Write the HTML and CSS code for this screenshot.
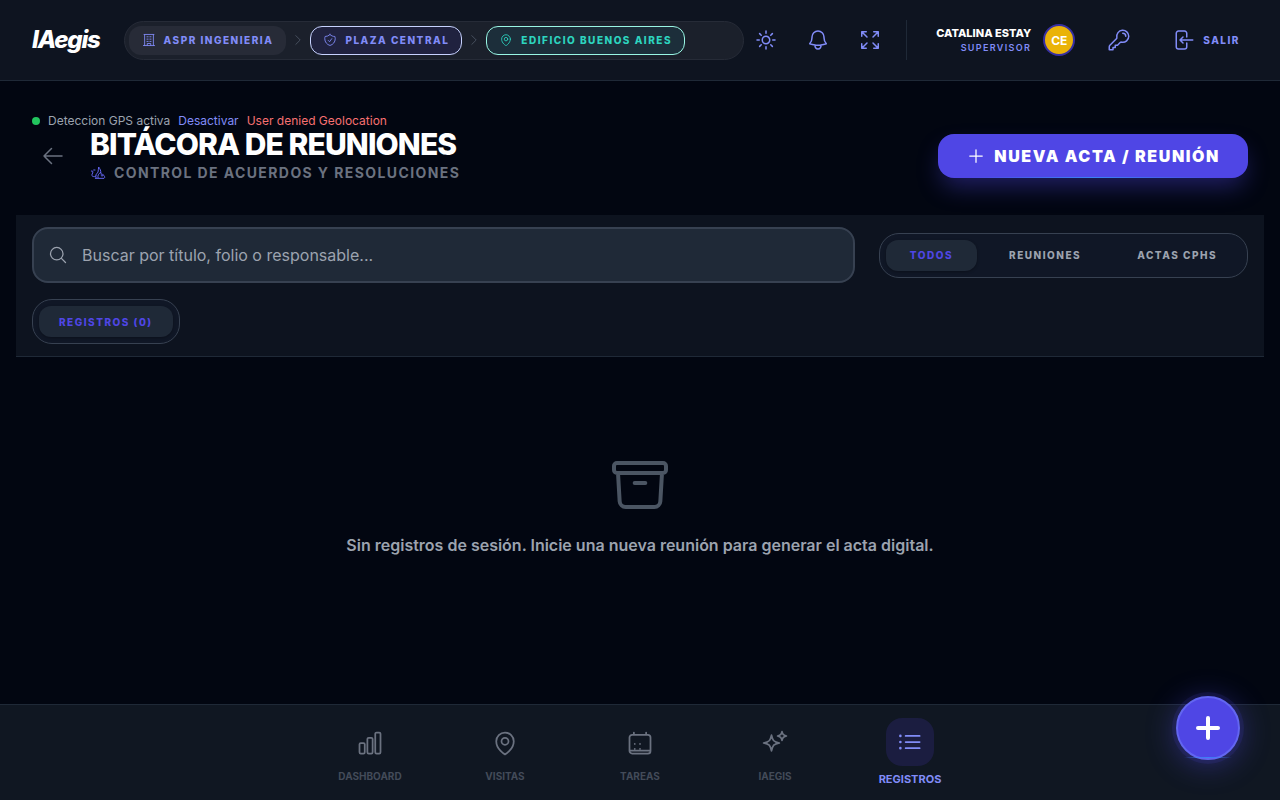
FILE: index.html
```html
<!DOCTYPE html>
<html lang="es">
<head>
    <meta charset="UTF-8">
    <meta name="viewport" content="width=device-width, initial-scale=1.0">
    <title>IAegis - Bitácora de Reuniones</title>
    <link rel="stylesheet" href="styles.css">
</head>
<body>
    <header class="topbar">
        <a href="#" class="logo">IAegis</a>

        <nav class="breadcrumb" aria-label="Contexto">
            <button class="crumb">
                <svg class="icon icon-xs" viewBox="0 0 24 24"><path d="M2.5 21.5h19M4.5 3v18.500M19.500 3v18.500M3.500 2.500h17M8.500 6.500h2m3 0h2M8.500 10.500h2m3 0h2M8.500 14.500h2m3 0h2M9 21.500v-3.500h6v3.500"/></svg>
                ASPR INGENIERIA
            </button>
            <svg class="icon icon-xs chevron" viewBox="0 0 24 24"><path d="m8.250 4.500 7.500 7.500-7.500 7.500"/></svg>
            <button class="crumb crumb-plaza">
                <svg class="icon icon-xs" viewBox="0 0 24 24"><path d="M9 12.75L11.25 15 15 9.750m-3-7.036A11.959 11.959 0 013.598 6 11.990 11.990 0 003 9.749c0 5.592 3.824 10.290 9 11.623 5.176-1.332 9-6.030 9-11.622 0-1.310-.21-2.571-.598-3.751h-.152c-3.196 0-6.100-1.248-8.250-3.285z"/></svg>
                PLAZA CENTRAL
            </button>
            <svg class="icon icon-xs chevron" viewBox="0 0 24 24"><path d="m8.250 4.500 7.500 7.500-7.500 7.500"/></svg>
            <button class="crumb crumb-edificio">
                <svg class="icon icon-xs" viewBox="0 0 24 24"><path d="M15 10.500a3 3 0 11-6 0 3 3 0 016 0z"/><path d="M19.500 10.500c0 7.142-7.500 11.250-7.500 11.250S4.500 17.642 4.500 10.500a7.500 7.500 0 1115 0z"/></svg>
                EDIFICIO BUENOS AIRES
            </button>
        </nav>

        <div class="tools">
            <button class="icon-button" aria-label="Tema">
                <svg class="icon" viewBox="0 0 24 24"><path d="M12 3v2.250m6.364.386l-1.591 1.591M21 12h-2.250m-.386 6.364l-1.591-1.591M12 18.750V21m-4.773-4.227l-1.591 1.591M5.250 12H3m4.227-4.773L5.636 5.636M15.750 12a3.750 3.750 0 11-7.500 0 3.750 3.750 0 017.500 0z"/></svg>
            </button>
            <button class="icon-button" aria-label="Notificaciones">
                <svg class="icon" viewBox="0 0 24 24"><path d="M14.857 17.082a23.848 23.848 0 005.454-1.310A8.967 8.967 0 0118 9.750v-.7V9A6 6 0 006 9v.75a8.967 8.967 0 01-2.312 6.022c1.733.64 3.560 1.085 5.455 1.310m5.714 0a24.255 24.255 0 01-5.714 0m5.714 0a3 3 0 11-5.714 0"/></svg>
            </button>
            <button class="icon-button" aria-label="Pantalla completa">
                <svg class="icon" viewBox="0 0 24 24"><path d="M3.750 3.750v4.500m0-4.500h4.500m-4.500 0L9 9M3.750 20.250v-4.500m0 4.500h4.500m-4.500 0L9 15M20.250 3.750h-4.500m4.500 0v4.500m0-4.500L15 9m5.250 11.250h-4.500m4.500 0v-4.500m0 4.500L15 15"/></svg>
            </button>
        </div>

        <div class="account">
            <div class="user">
                <span class="user-name">CATALINA ESTAY</span>
                <span class="user-role">SUPERVISOR</span>
            </div>
            <span class="avatar">CE</span>
            <button class="icon-button key-button" aria-label="Cambiar clave">
                <svg class="icon" viewBox="0 0 24 24"><path d="M15.750 5.250a3 3 0 013 3m3 0a6 6 0 01-7.029 5.912c-.563-.097-1.159.026-1.563.43L10.500 17.250H8.250v2.250H6v2.250H2.250v-2.818c0-.597.237-1.170.659-1.591l6.499-6.499c.404-.404.527-1 .43-1.563A6 6 0 1121.750 8.250z"/></svg>
            </button>
            <button class="logout">
                <svg class="icon" viewBox="0 0 24 24"><path d="M15.750 9V5.250A2.250 2.250 0 0013.500 3h-6a2.250 2.250 0 00-2.250 2.250v13.500A2.250 2.250 0 007.500 21h6a2.250 2.250 0 002.250-2.250V15M12 9l-3 3m0 0l3 3m-3-3h12.750"/></svg>
                SALIR
            </button>
        </div>
    </header>

    <main class="content">
        <div class="gps">
            <span class="gps-dot"></span>
            <span>Deteccion GPS activa</span>
            <button class="gps-toggle">Desactivar</button>
            <span class="gps-error">User denied Geolocation</span>
        </div>

        <div class="page-head">
            <a href="#" class="back" aria-label="Volver">
                <svg class="icon" viewBox="0 0 24 24"><path d="M10.500 19.500L3 12m0 0l7.500-7.500M3 12h18"/></svg>
            </a>
            <div class="titles">
                <h1>BITÁCORA DE REUNIONES</h1>
                <p class="subtitle">
                    <svg class="icon icon-sm" viewBox="0 0 24 24"><path d="M2 9c2-1 3 1 2 3s-2 4 0 5c2 .8 4 .5 5-.5M5.500 7.500h2M9 19c-1-3 0-6 3-8 1-3 0-5 1-8 2 3 4 6 3 9M12 19c-1-3 1-6 4-8 2 2 0 5 2 6 1-1 1-2 1-3 3 2 4 5 2 6H8"/></svg>
                    CONTROL DE ACUERDOS Y RESOLUCIONES
                </p>
            </div>
            <button class="new-button">
                <svg class="icon icon-md" viewBox="0 0 24 24"><path d="M12 4.500v15m7.500-7.500h-15"/></svg>
                NUEVA ACTA / REUNIÓN
            </button>
        </div>

        <section class="filters">
            <div class="filter-row">
                <label class="search">
                    <svg class="icon icon-md" viewBox="0 0 24 24"><path d="M21 21l-5.197-5.197m0 0A7.500 7.500 0 105.196 5.196a7.500 7.500 0 0010.607 10.607z"/></svg>
                    <input type="text" aria-label="Buscar" placeholder="Buscar por título, folio o responsable...">
                </label>
                <div class="tabs">
                    <button class="tab active">TODOS</button>
                    <button class="tab">REUNIONES</button>
                    <button class="tab">ACTAS CPHS</button>
                </div>
            </div>
            <div class="tabs tabs-count">
                <button class="tab active">REGISTROS (0)</button>
            </div>
        </section>

        <section class="empty">
            <svg class="icon icon-xl" viewBox="0 0 24 24"><path d="M20.250 7.500l-.625 10.632a2.250 2.250 0 01-2.247 2.118H6.622a2.250 2.250 0 01-2.247-2.118L3.750 7.500M10 11.250h4M3.375 7.500h17.250c.621 0 1.125-.504 1.125-1.125v-1.500c0-.621-.504-1.125-1.125-1.125H3.375c-.621 0-1.125.504-1.125 1.125v1.500c0 .621.504 1.125 1.125 1.125z"/></svg>
            <p>Sin registros de sesión. Inicie una nueva reunión para generar el acta digital.</p>
        </section>
    </main>

    <nav class="bottom-nav">
        <a href="#" class="nav-item">
            <svg class="icon icon-lg" viewBox="0 0 24 24"><path d="M3 13.125C3 12.504 3.504 12 4.125 12h2.250c.621 0 1.125.504 1.125 1.125v6.750C7.500 20.496 6.996 21 6.375 21h-2.250A1.125 1.125 0 013 19.875v-6.750zM9.750 8.625c0-.621.504-1.125 1.125-1.125h2.250c.621 0 1.125.504 1.125 1.125v11.250c0 .621-.504 1.125-1.125 1.125h-2.250a1.125 1.125 0 01-1.125-1.125V8.625zM16.500 4.125c0-.621.504-1.125 1.125-1.125h2.250C20.496 3 21 3.504 21 4.125v15.750c0 .621-.504 1.125-1.125 1.125h-2.250a1.125 1.125 0 01-1.125-1.125V4.125z"/></svg>
            <span>DASHBOARD</span>
        </a>
        <a href="#" class="nav-item">
            <svg class="icon icon-lg" viewBox="0 0 24 24"><path d="M15 10.500a3 3 0 11-6 0 3 3 0 016 0z"/><path d="M19.500 10.500c0 7.142-7.500 11.250-7.500 11.250S4.500 17.642 4.500 10.500a7.500 7.500 0 1115 0z"/></svg>
            <span>VISITAS</span>
        </a>
        <a href="#" class="nav-item">
            <svg class="icon icon-lg" viewBox="0 0 24 24"><path d="M6.750 3v2M17.250 3v2M5.250 5h13.500A2.250 2.250 0 0121 7.250v11.500A2.250 2.250 0 0118.750 21H5.250A2.250 2.250 0 013 18.750V7.250A2.250 2.250 0 015.250 5zM3 18.500h18M7.500 12.750h.01M12 12.750h.01M7.500 17h.01M12 17h.01"/></svg>
            <span>TAREAS</span>
        </a>
        <a href="#" class="nav-item">
            <svg class="icon icon-lg" viewBox="0 0 24 24"><path d="M9.813 15.904L9 18.750l-.813-2.846a4.500 4.500 0 00-3.090-3.090L2.250 12l2.846-.813a4.500 4.500 0 003.090-3.090L9 5.250l.813 2.846a4.500 4.500 0 003.090 3.090L15.750 12l-2.846.813a4.500 4.500 0 00-3.090 3.090zM18.259 8.715L18 9.750l-.259-1.035a3.375 3.375 0 00-2.455-2.456L14.250 6l1.036-.259a3.375 3.375 0 002.455-2.456L18 2.250l.259 1.035a3.375 3.375 0 002.456 2.456L21.750 6l-1.035.259a3.375 3.375 0 00-2.456 2.456z"/></svg>
            <span>IAEGIS</span>
        </a>
        <a href="#" class="nav-item current">
            <span class="nav-icon"><svg class="icon icon-lg" viewBox="0 0 24 24"><path d="M8.250 6.750h12M8.250 12h12m-12 5.250h12M3.750 6.750h.007v.008H3.750V6.750zm.375 0a.375.375 0 11-.75 0 .375.375 0 01.75 0zM3.750 12h.007v.008H3.750V12zm.375 0a.375.375 0 11-.75 0 .375.375 0 01.75 0zm-.375 5.250h.007v.008H3.750v-.008zm.375 0a.375.375 0 11-.75 0 .375.375 0 01.75 0z"/></svg></span>
            <span>REGISTROS</span>
        </a>
    </nav>

    <button class="fab" aria-label="Acciones">
        <svg class="icon" viewBox="0 0 24 24"><path d="M12 4.500v15m7.500-7.500h-15"/></svg>
    </button>
</body>
</html>
```
FILE: styles.css
```css
:root {
    --bg: #020611;
    --bar: #0e1420;
    --surface: #1f2937;
    --line: #1f2937;
    --line-strong: #374151;
    --indigo: #4f46e5;
    --indigo-light: #818cf8;
    --gray: #9ca3af;
    --gray-dark: #6b7280;
}

* { box-sizing: border-box; }

body {
    margin: 0;
    min-height: 100vh;
    display: flex;
    flex-direction: column;
    background: var(--bg);
    color: #fff;
    font-family: Inter, "Liberation Sans", sans-serif;
}

button {
    font: inherit;
    color: inherit;
    background: none;
    border: none;
    padding: 0;
    cursor: pointer;
}
a { color: inherit; text-decoration: none; }
h1, p { margin: 0; }

.icon {
    width: 24px;
    height: 24px;
    flex-shrink: 0;
    fill: none;
    stroke: currentColor;
    stroke-width: 1.5;
    stroke-linecap: round;
    stroke-linejoin: round;
}
.icon-xs { width: 14px; height: 14px; }
.icon-sm { width: 16px; height: 16px; }
.icon-md { width: 20px; height: 20px; }
.icon-lg { width: 28px; height: 28px; }
.icon-xl { width: 64px; height: 64px; }

/* Barra superior */
.topbar {
    display: flex;
    align-items: center;
    height: 81px;
    padding: 0 32px;
    background: var(--bar);
    border-bottom: 1px solid var(--line);
}
.logo {
    margin-right: 24px;
    font-size: 24px;
    font-weight: 800;
    font-style: italic;
    line-height: 32px;
    letter-spacing: -0.05em;
}
.breadcrumb {
    display: flex;
    flex: 1;
    align-items: center;
    gap: 5px;
    padding: 4px;
    background: #1b202b;
    border: 1px solid #262b37;
    border-radius: 20px;
}
.crumb {
    display: flex;
    align-items: center;
    gap: 8px;
    height: 29px;
    padding: 0 12px;
    border: 1px solid transparent;
    border-radius: 12px;
    background: #272b37;
    color: var(--indigo-light);
    font-size: 10px;
    font-weight: 800;
    letter-spacing: 0.15em;
    white-space: nowrap;
}
.crumb-plaza { background: #20223f; border-color: #c7d2fe; }
.crumb-edificio { background: #1c2e3a; border-color: #99f6e4; color: #2dd4bf; }
.chevron { color: #4b5563; }

.tools { display: flex; gap: 12px; padding: 0 16px 0 2px; }
.icon-button {
    display: flex;
    align-items: center;
    justify-content: center;
    width: 40px;
    height: 40px;
    color: var(--indigo-light);
}
.account {
    display: flex;
    align-items: center;
    height: 40px;
    padding-left: 29px;
    border-left: 1px solid var(--line);
}
.user { display: flex; flex-direction: column; align-items: flex-end; }
.user-name { font-size: 11px; line-height: 16px; font-weight: 800; }
.user-role {
    color: var(--indigo-light);
    font-size: 9px;
    line-height: 14px;
    font-weight: 600;
    letter-spacing: 0.15em;
}
.avatar {
    display: flex;
    align-items: center;
    justify-content: center;
    width: 32px;
    height: 32px;
    margin-left: 12px;
    border: 2px solid #3730a3;
    border-radius: 50%;
    background: #eab308;
    font-size: 12px;
    font-weight: 700;
}
.key-button { margin-left: 24px; }
.logout {
    display: flex;
    align-items: center;
    gap: 8px;
    margin-left: 24px;
    padding: 8px;
    color: var(--indigo-light);
    font-size: 10px;
    font-weight: 800;
    letter-spacing: 0.15em;
}

/* Contenido */
.content { flex: 1; padding: 32px 16px 0; }
.gps {
    display: flex;
    align-items: center;
    gap: 8px;
    padding: 0 16px;
    color: var(--gray);
    font-size: 12px;
    line-height: 16px;
}
.gps-dot { width: 8px; height: 8px; border-radius: 50%; background: #22c55e; }
.gps-toggle { color: var(--indigo-light); }
.gps-error { color: #f87171; }

.page-head { display: flex; align-items: center; padding: 0 16px; }
.back {
    display: flex;
    padding: 9px;
    margin-right: 16px;
    color: var(--gray-dark);
}
.titles { flex: 1; }
h1 {
    font-size: 30px;
    line-height: 30px;
    font-weight: 800;
    letter-spacing: -0.03em;
}
.subtitle {
    display: flex;
    align-items: center;
    gap: 8px;
    margin-top: 4px;
    color: var(--gray-dark);
    font-size: 14px;
    line-height: 20px;
    font-weight: 700;
    letter-spacing: 0.1em;
}
.subtitle .icon { color: #6366f1; }
.new-button {
    position: relative;
    display: flex;
    align-items: center;
    gap: 8px;
    height: 44px;
    padding: 0 28px;
    border-radius: 16px;
    background: var(--indigo);
    box-shadow: 0 12px 24px -4px rgba(79, 70, 229, 0.4);
    font-size: 16px;
    font-weight: 900;
    letter-spacing: 0.1em;
}
/* brillo del borde inferior */
.new-button::after,
.fab::after {
    content: "";
    position: absolute;
    left: 10%;
    right: 10%;
    bottom: 0;
    height: 1px;
    background: linear-gradient(90deg, transparent, #3b82f6, transparent);
}

.filters {
    margin-top: 32px;
    padding: 12px 16px;
    background: #0d131f;
    border-bottom: 1px solid var(--line);
    position: relative;
}
.filter-row { display: flex; align-items: center; gap: 24px; margin-bottom: 16px; }
.search {
    display: flex;
    flex: 1;
    align-items: center;
    gap: 14px;
    height: 56px;
    padding: 0 14px;
    background: var(--surface);
    border: 2px solid var(--line-strong);
    border-radius: 16px;
    color: var(--gray);
}
.search input {
    flex: 1;
    min-width: 0;
    padding: 0;
    border: none;
    outline: none;
    background: none;
    color: #fff;
    font: inherit;
    font-size: 16px;
}
.search input::placeholder { color: var(--gray); }
.tabs {
    display: flex;
    gap: 8px;
    padding: 6px;
    background: #101726;
    border: 1px solid var(--line-strong);
    border-radius: 20px;
}
.tabs-count { width: fit-content; }
.tab {
    height: 31px;
    padding: 0 24px;
    border-radius: 12px;
    color: var(--gray);
    font-size: 10px;
    font-weight: 800;
    letter-spacing: 0.15em;
}
.tabs-count .tab { padding: 0 20px; }
.tab.active {
    background: var(--surface);
    color: var(--indigo);
    box-shadow: 0 1px 3px rgba(0, 0, 0, 0.3);
}

.empty {
    display: flex;
    flex-direction: column;
    align-items: center;
    gap: 16px;
    padding: 96px 16px;
    color: #4b5563;
}
.empty p {
    color: var(--gray);
    font-size: 16px;
    line-height: 24px;
    font-weight: 600;
    text-align: center;
}

/* Navegación inferior */
.bottom-nav {
    position: sticky;
    bottom: 0;
    display: flex;
    justify-content: center;
    height: 96px;
    background: #101722;
    border-top: 1px solid var(--line);
}
.nav-item {
    display: flex;
    flex-direction: column;
    align-items: center;
    gap: 12px;
    width: 135px;
    padding-top: 24px;
    color: var(--gray-dark);
    font-size: 10px;
    line-height: 14px;
    font-weight: 700;
}
.nav-item > span { color: #434b59; }
.nav-item.current {
    gap: 6px;
    padding-top: 13px;
    color: var(--indigo-light);
    font-size: 11px;
}
.nav-item.current > span { color: inherit; }
.nav-item .nav-icon {
    display: flex;
    align-items: center;
    justify-content: center;
    width: 48px;
    height: 48px;
    border-radius: 16px;
    background: #1b1d40;
}

.fab {
    position: fixed;
    right: 40px;
    bottom: 40px;
    display: flex;
    align-items: center;
    justify-content: center;
    width: 64px;
    height: 64px;
    border: 2px solid #6366f1;
    border-radius: 50%;
    background: var(--indigo);
    box-shadow: 0 0 0 4px rgba(79, 70, 229, 0.12), 0 4px 30px rgba(79, 70, 229, 0.45);
}
.fab .icon { width: 32px; height: 32px; stroke-width: 3; }
```
